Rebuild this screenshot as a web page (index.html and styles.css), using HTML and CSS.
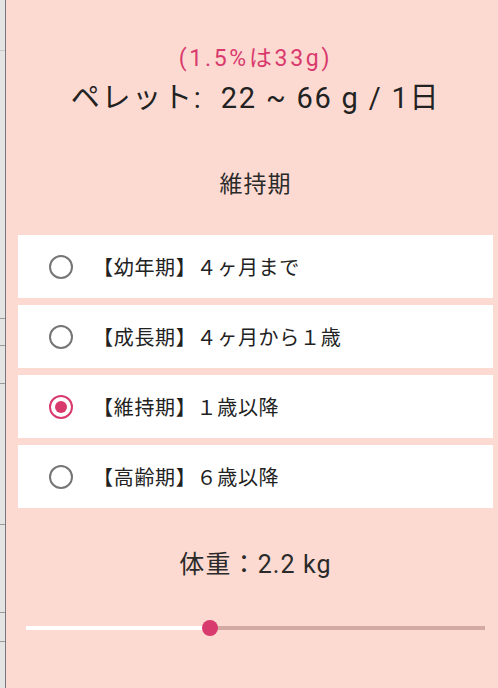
FILE: index.html
```html
<!DOCTYPE html>
<html lang="ja">
<head>
<meta charset="utf-8">
<link rel="stylesheet" href="styles.css">
</head>
<body>
<div class="app">
  <div class="edge"></div>
  <main class="panel">
    <p class="ratio">(1.5%は33g)</p>
    <h1 class="amount">ペレット: <span class="range">22 ~ 66 g / 1日</span></h1>
    <h2 class="stage">維持期</h2>
    <div class="options">
      <label class="option"><span class="radio"></span><span class="label">【幼年期】４ヶ月まで</span></label>
      <label class="option"><span class="radio"></span><span class="label">【成長期】４ヶ月から１歳</span></label>
      <label class="option"><span class="radio checked"></span><span class="label">【維持期】１歳以降</span></label>
      <label class="option"><span class="radio"></span><span class="label">【高齢期】６歳以降</span></label>
    </div>
    <p class="weight">体重：2.2 kg</p>
    <div class="slider">
      <div class="track-active" style="width:40%"></div>
      <div class="thumb"></div>
      <div class="track-rest"></div>
    </div>
  </main>
</div>
</body>
</html>
```
FILE: styles.css
```css
* { box-sizing: border-box; }
html, body { margin: 0; padding: 0; }
body {
  font-family: Roboto, "Noto Sans CJK JP", sans-serif;
  color: #222;
  background: #fddad1;
}
.app {
  display: flex;
  height: 688px;
  overflow: hidden;
}
.edge {
  flex: none;
  width: 6px;
  background-color: #e4e4e4;
  border-right: 1px solid #777;
  background-image:
    linear-gradient(#c8c8c8, #c8c8c8),
    linear-gradient(#999, #999),
    linear-gradient(#999, #999),
    linear-gradient(#999, #999),
    linear-gradient(#999, #999),
    linear-gradient(#999, #999),
    linear-gradient(#999, #999);
  background-repeat: no-repeat;
  background-size: 5px 1px;
  background-position: 0 50px, 0 318px, 0 345px, 0 383px, 0 524px, 0 612px, 0 641px;
}
.panel {
  flex: 1;
  min-width: 0;
  padding: 0 5px 0 12px;
  text-align: center;
  display: flex;
  flex-direction: column;
}
.ratio {
  margin: 46px 0 0;
  font-size: 23px;
  line-height: 26px;
  letter-spacing: 2.7px;
  color: #d93a6e;
}
.amount {
  margin: 9px 0 0;
  font-size: 29px;
  line-height: 34px;
  font-weight: 400;
  letter-spacing: 1.8px;
  color: #222;
}
.range {
  margin-left: 9px;
}
.stage {
  margin: 55px 0 0;
  font-size: 23px;
  line-height: 30px;
  font-weight: 400;
  letter-spacing: 1px;
  color: #2a2a2a;
}
.options {
  margin-top: 35px;
  display: flex;
  flex-direction: column;
  gap: 7px;
}
.option {
  height: 63px;
  background: #fff;
  display: flex;
  align-items: center;
  padding-left: 31px;
  text-align: left;
}
.radio {
  flex: none;
  width: 24px;
  height: 24px;
  border-radius: 50%;
  border: 2px solid #767676;
  display: flex;
  align-items: center;
  justify-content: center;
}
.radio.checked {
  border-color: #d93a6e;
}
.radio.checked::after {
  content: "";
  width: 12px;
  height: 12px;
  border-radius: 50%;
  background: #d93a6e;
}
.label {
  margin-left: 20px;
  font-size: 20px;
  letter-spacing: 0.7px;
  color: #222;
}
.weight {
  margin: 42px 0 0;
  font-size: 25px;
  line-height: 30px;
  letter-spacing: 1.1px;
  color: #2a2a2a;
}
.slider {
  margin: 40px 0 0 8px;
  width: 459px;
  height: 16px;
  display: flex;
  align-items: center;
}
.track-active {
  height: 4px;
  background: #fff;
  flex: none;
}
.thumb {
  flex: none;
  width: 16px;
  height: 16px;
  border-radius: 50%;
  background: #d93a6e;
  margin: 0 -8px;
  position: relative;
  z-index: 1;
}
.track-rest {
  flex: 1;
  height: 4px;
  background: #d2aaa1;
}
```
